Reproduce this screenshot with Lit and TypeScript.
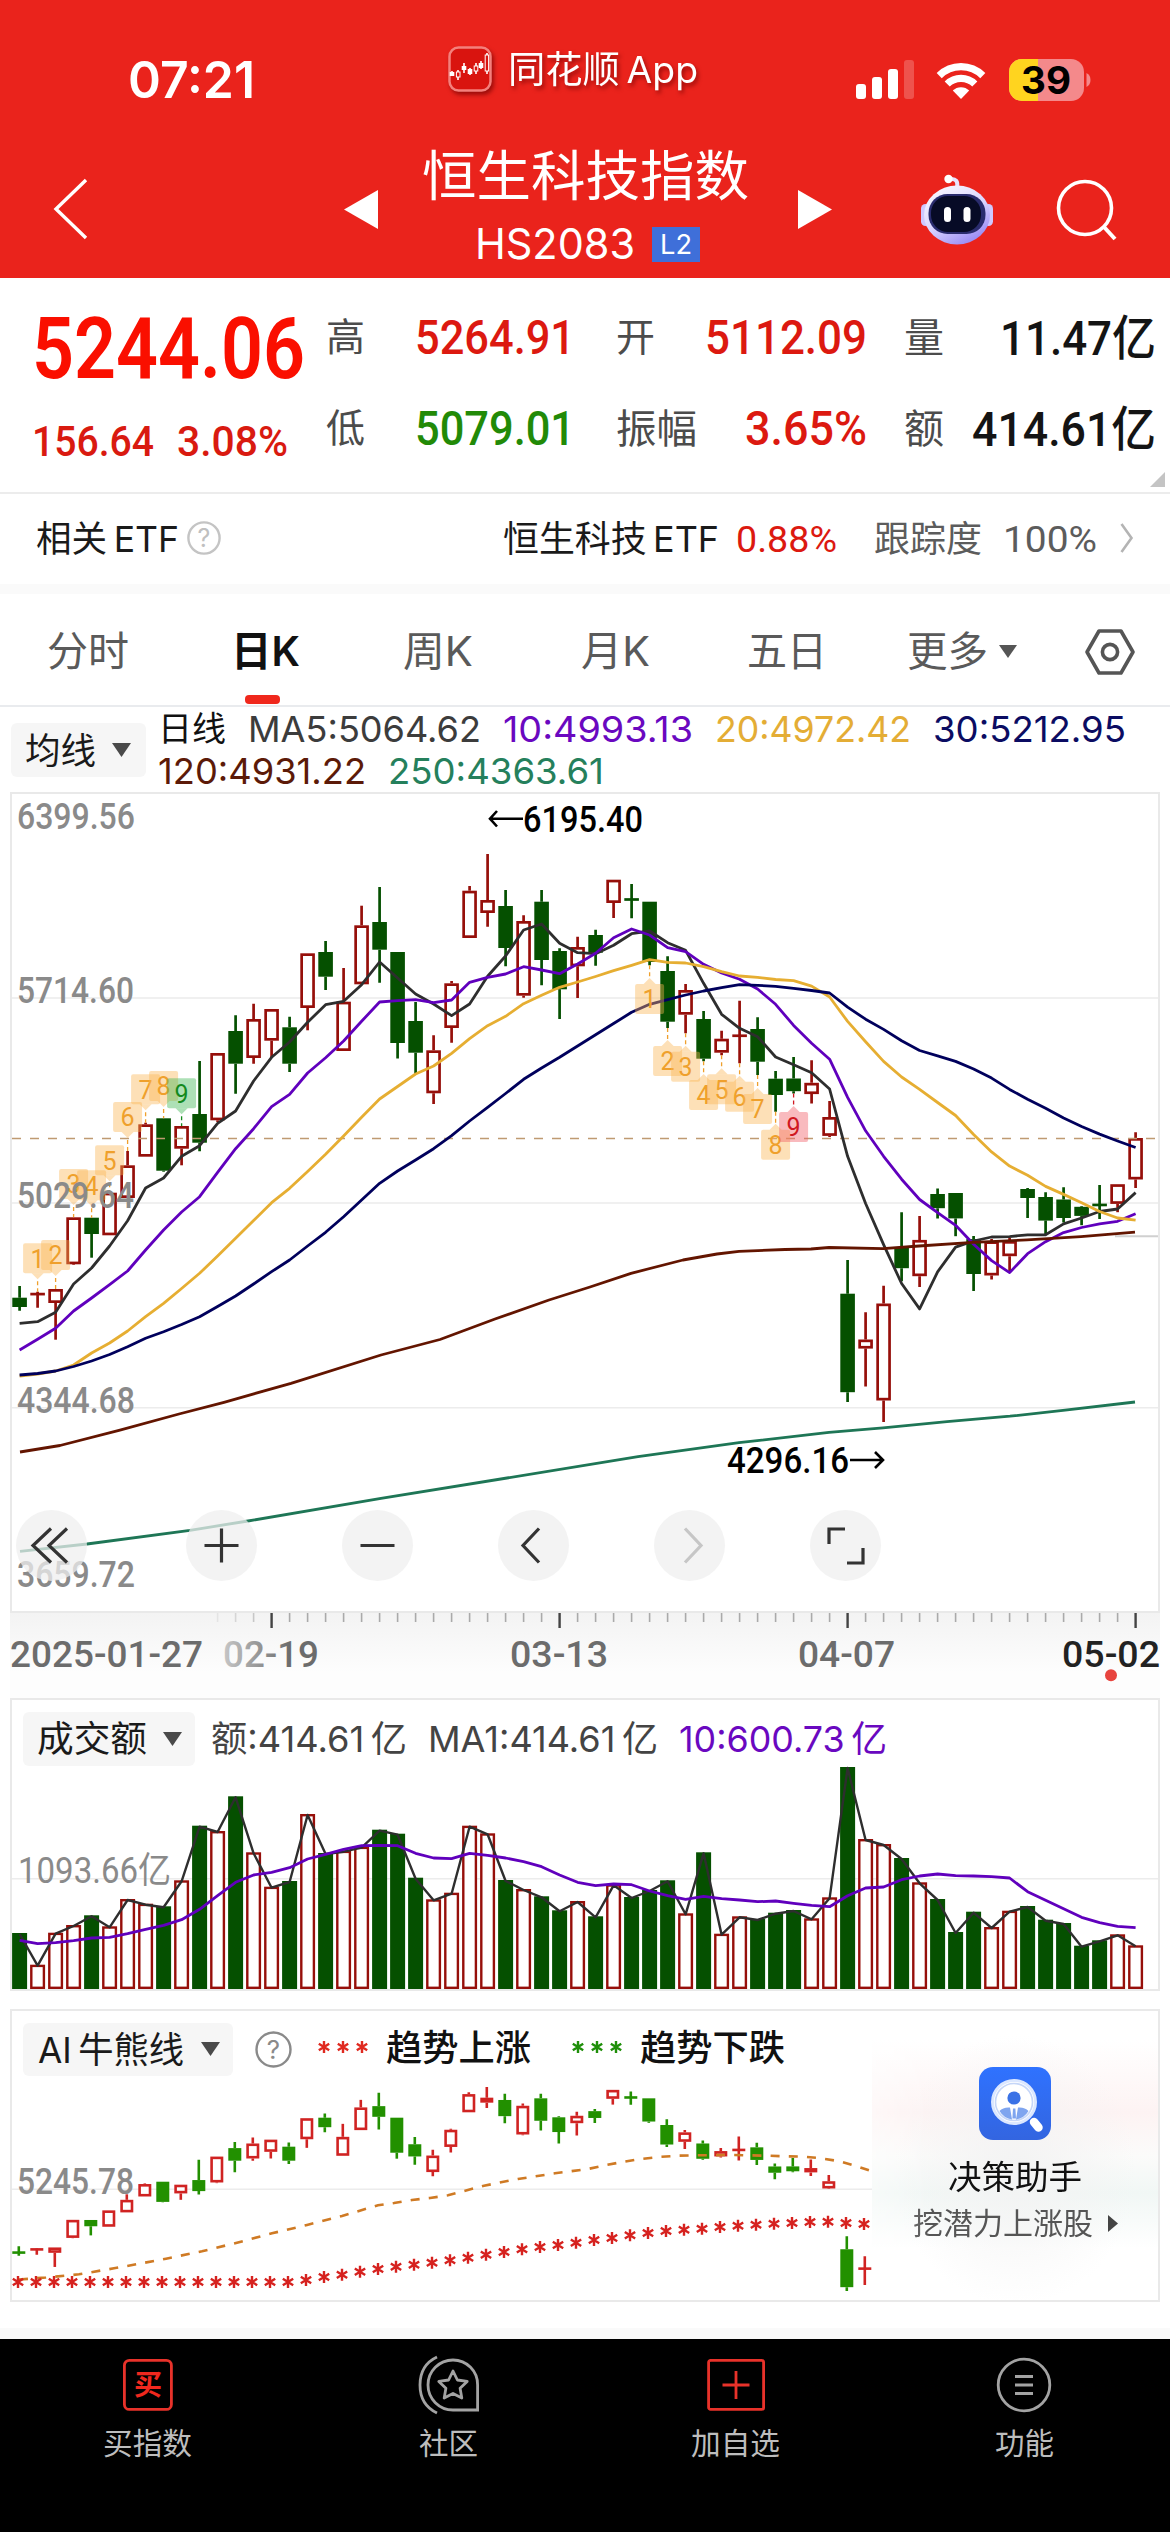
import { LitElement, html, css, svg } from "lit";
import { customElement } from "lit/decorators.js";

/* ---------- data ---------- */

// direction, high, body top, body bottom, low (plot units)
type Candle = [number, number, number, number, number];
const UP = 1;
const DN = 0;

const candles: Candle[] = [
  [DN, 1286, 1297.7, 1307, 1310.7], [UP, 1291.7, 1293, 1295.2, 1307.7], [UP, 1289, 1289, 1303, 1339.7],
  [UP, 1217.3, 1217.3, 1264.3, 1265], [DN, 1217.7, 1217.7, 1234, 1257.7], [UP, 1192.7, 1192.7, 1235.3, 1235.3],
  [UP, 1151, 1165.3, 1198, 1198], [UP, 1122.7, 1124.3, 1156.7, 1156.7], [DN, 1118.3, 1118.3, 1170.7, 1171.7],
  [UP, 1126, 1126, 1148.7, 1165.3], [DN, 1061, 1114, 1142.7, 1151.3], [UP, 1053, 1053, 1120.3, 1122],
  [DN, 1015.3, 1031, 1063.7, 1093.7], [UP, 1003.7, 1019, 1058, 1063.7], [UP, 1009, 1009, 1040.7, 1058],
  [DN, 1016.7, 1027.3, 1063.7, 1072], [UP, 953.3, 953.3, 1008, 1030.3], [DN, 941, 952, 976.7, 990],
  [UP, 968, 1001.7, 1051, 1051], [UP, 905.7, 925.3, 984.3, 984.3], [DN, 887, 922, 949.7, 982.7],
  [DN, 952, 952, 1043, 1058.5], [DN, 1002, 1021, 1052.7, 1074], [UP, 1035.3, 1050.3, 1093.3, 1104],
  [UP, 981, 983.3, 1028, 1042.7], [UP, 886, 890.7, 938, 938], [UP, 854, 900, 913, 926.7],
  [DN, 890, 906, 948, 966.3], [UP, 915.3, 921, 995.7, 997.7], [DN, 890, 901.7, 960, 985.3],
  [DN, 948.3, 951, 989.3, 1019], [UP, 936.7, 947, 966.3, 998], [DN, 929.7, 935, 952.7, 965.7],
  [UP, 879.7, 879.7, 903, 918], [DN, 884, 898, 901, 918.3], [DN, 901.7, 901.7, 962, 965.3],
  [DN, 956.3, 971, 1021.7, 1028], [UP, 984, 990, 1014.7, 1033.3], [DN, 1011, 1019, 1058.7, 1061.3],
  [UP, 1030.7, 1038.7, 1052.7, 1055.3], [UP, 1000.7, 1034.5, 1037, 1063.3], [DN, 1017.3, 1029, 1061.7, 1075],
  [DN, 1071, 1078.7, 1095, 1111.7], [DN, 1057, 1078.5, 1091.2, 1093.4], [UP, 1060.3, 1082.8, 1094.1, 1103.6],
  [UP, 1101, 1117, 1135.9, 1137], [DN, 1259.9, 1293.7, 1392.2, 1402], [UP, 1312.2, 1339.5, 1348.6, 1386.4],
  [UP, 1285.7, 1303.5, 1400.5, 1422], [DN, 1212.2, 1247.1, 1268.2, 1281.3], [UP, 1215.9, 1239.9, 1276.2, 1287.1],
  [DN, 1188.6, 1194, 1208.2, 1218.4], [DN, 1193, 1193, 1218.4, 1236.2], [DN, 1236, 1239.1, 1274, 1291.1],
  [UP, 1239.1, 1241.3, 1275.5, 1279.5], [UP, 1238, 1241, 1256.2, 1271.9], [DN, 1187.9, 1189, 1198, 1218],
  [DN, 1192.2, 1197, 1220.6, 1234.4], [DN, 1187.2, 1199.5, 1218, 1222.4], [DN, 1206, 1206.8, 1215.9, 1225.3],
  [DN, 1185, 1203.5, 1206.4, 1219.1], [UP, 1184.2, 1184.2, 1203.9, 1212.2], [UP, 1132.3, 1138, 1179.5, 1187.9],
];

const ma5 = [
  1323.3, 1321.7, 1312.3, 1284, 1268, 1246, 1220.7, 1188, 1178, 1156.3, 1145.7, 1123.3, 1111, 1081, 1057.3, 1042,
  1022.3, 1004.7, 1001.3, 984.7, 962, 978, 994, 1004, 1015.7, 1004, 976.3, 956, 930, 924, 943.3, 952.7, 953.7, 945.3,
  933.7, 931, 942.7, 950.3, 983.3, 1014.3, 1028.3, 1036.7, 1057, 1064.7, 1072.7, 1089, 1156.3, 1203.5, 1244.6, 1283.5,
  1308.9, 1271.9, 1247.1, 1241, 1237, 1236.6, 1234.8, 1234.8, 1223.9, 1218, 1211.5, 1209, 1192.6,
];
const ma10 = [
  1350, 1339.3, 1328.3, 1311, 1298, 1284.7, 1271, 1250, 1230, 1212, 1196.7, 1172.3, 1148.7, 1128.7, 1106.7, 1094.3,
  1073, 1057.7, 1041, 1021.3, 1002, 1000.7, 999.7, 1002.7, 1000, 982.3, 977.3, 974, 966.7, 970, 973.7, 964, 953.3,
  937.7, 929, 935, 947.7, 951.7, 964.3, 973, 979.3, 989, 1004.3, 1025.4, 1043.2, 1059.2, 1097.4, 1130.8, 1156.3,
  1179.2, 1199.5, 1212.6, 1225.3, 1244.2, 1260.6, 1272.6, 1253.7, 1241.7, 1232.6, 1227.5, 1223.9, 1221.3, 1213.7,
];
const ma20 = [
  1376, 1374, 1371, 1365, 1353, 1343, 1331, 1316.7, 1303.3, 1288.5, 1273.3, 1256, 1238.3, 1220.5, 1202.7, 1188.3,
  1171.5, 1154.3, 1136, 1117.3, 1099, 1086.5, 1074, 1066, 1053.3, 1038.7, 1025.7, 1016.3, 1003.7, 995.3, 987.3, 982,
  976.5, 970.7, 965.3, 959.7, 962.3, 963, 966.7, 971.7, 976, 977.3, 979.5, 980.7, 986.1, 997, 1021.4, 1041.8, 1061.4,
  1077, 1089.4, 1102.5, 1115.5, 1134.5, 1151.9, 1166.1, 1175.2, 1186.4, 1194.4, 1202.8, 1211.5, 1218, 1220.2,
];
const ma30 = [
  1375, 1373.5, 1371, 1366.5, 1361, 1354.5, 1346.7, 1338.3, 1331.7, 1324.5, 1316.7, 1306.5, 1296, 1284, 1271.7, 1260,
  1246, 1232.3, 1216.7, 1200, 1183.3, 1171, 1160, 1148.7, 1135.7, 1121, 1107.3, 1093.5, 1079.3, 1068, 1057.3, 1046,
  1034.7, 1023.5, 1012.3, 1004.3, 999.7, 995, 991, 987.7, 984.7, 985.3, 986.3, 988.3, 990.5, 993, 1007.2, 1019.2,
  1029.4, 1040.7, 1050.5, 1055.9, 1061.4, 1069, 1078.1, 1089.4, 1099.2, 1108.3, 1118.1, 1126.5, 1134.1, 1141, 1147.5,
];
const ma120 =
  "20,1452 60,1445.5 119,1430.3 179,1414 224,1402.3 291,1383.3 381,1355 440,1339.5 495,1319 549,1300 590,1287 631,1273.3 683,1260 717,1254 739,1251.3 785,1249.5 811,1249 829,1247.5 883,1248.6 919,1246 973,1242.4 1027,1239.9 1081,1236.6 1135,1232.2";
const ma250 =
  "20,1551.3 87,1544 190,1530.3 248,1521 381,1498.3 507,1478 638,1456.7 739,1442.7 829,1432.3 883,1427.8 947,1421.6 1010,1416.2 1063,1410.4 1135,1402";

const volTop = [
  1933, 1964.7, 1932.7, 1925, 1915.3, 1926.3, 1899, 1903.7, 1906.3, 1880.3, 1825.7, 1831, 1796.3, 1852.3, 1886.7, 1881,
  1814, 1853, 1850.7, 1846.7, 1829.7, 1833.7, 1877.7, 1899.3, 1892.7, 1825.7, 1833.3, 1880, 1889, 1896.3, 1910.3, 1901,
  1916.3, 1884.3, 1897, 1890, 1880.3, 1913.3, 1852.3, 1933.7, 1916.3, 1919, 1912.7, 1910, 1918.3, 1897.3, 1767, 1839,
  1844, 1858, 1882.3, 1899, 1932, 1911.7, 1927, 1910.7, 1906, 1919.7, 1923, 1945.7, 1940.3, 1934.3, 1945.3,
];
const volMa = [
  1940.3, 1943.7, 1942.7, 1940.7, 1938, 1937.3, 1933.7, 1929.3, 1925.3, 1919.7, 1909.3, 1895.7, 1882.3, 1875, 1872.3,
  1867.7, 1859, 1854.3, 1849.3, 1845.7, 1845.3, 1845.7, 1853.3, 1858, 1858.7, 1853.3, 1855.3, 1858, 1861.7, 1866.7, 1875,
  1882.3, 1885.7, 1884, 1884.7, 1891, 1895.7, 1899.3, 1896.3, 1898.7, 1900, 1901.7, 1901, 1903.3, 1905.3, 1906.7, 1895.7,
  1888, 1887, 1879.7, 1876, 1874, 1875.7, 1876, 1876.7, 1878, 1891.7, 1900.3, 1908.7, 1917.3, 1922.7, 1926.3, 1927.7,
];
const volBase = 1989;

const bullStars = [
  ...Array(16).fill(2282), 2280, 2277, 2274.7, 2271.7, 2269, 2266.7, 2264.7, 2262.7, 2260.3, 2257.7, 2254.7, 2252, 2249.3,
  2247, 2245, 2242.7, 2240, 2238, 2235.3, 2233, 2231, 2229.7, 2228.7, 2227, 2225.7, 2224.7, 2223.7, 2223, 2222, 2221.7,
  2223, 2224,
] as number[];
const bearLine =
  "19,2279.5 46,2277.5 79,2274.3 114,2268.3 131,2265.3 166,2258.7 202,2251.3 237,2242.7 272,2233.3 307,2225 342,2216 378,2205.3 394,2203 412,2200 430,2198 448,2195.3 484,2185.7 518,2179 555,2173.3 588,2169 606,2165 624,2161.7 641,2159 659,2157 677,2155.7 696,2155.3 731,2155 768,2155.7 785,2156.3 804,2156.7 821,2158.3 840,2161.3 857,2166.3 871,2171";

// index, badge top, digit, anchored above the candle (1) or below it (0), tone
const marks: [number, number, string, number, string][] = [
  [1, 1243.3, "1", 1, "y"], [2, 1240, "2", 1, "y"], [3, 1169, "3", 1, "y"], [4, 1170.3, "4", 1, "y"],
  [5, 1145.3, "5", 1, "y"], [6, 1102, "6", 1, "y"], [7, 1074.3, "7", 1, "y"], [8, 1071, "8", 1, "y"],
  [9, 1078.3, "9", 1, "g"], [35, 984, "1", 0, "y"], [36, 1046, "2", 0, "y"], [37, 1051.7, "3", 0, "y"],
  [38, 1080, "4", 0, "y"], [39, 1074.3, "5", 0, "y"], [40, 1081.7, "6", 0, "y"], [41, 1094, "7", 0, "y"],
  [42, 1129.7, "8", 0, "y"], [43, 1112, "9", 0, "r"],
];

/* ---------- drawing helpers ---------- */

const cx = (i: number) => 19.6 + 18 * i;
const line = (ys: number[]) => ys.map((y, i) => `${cx(i)},${y}`).join(" ");

// Text set to an exact advance width, vertically centred in its line box.
const fit = (text: string, w: number, size: number, cls = "", h = Math.round(size * 1.2)) => html`<svg
  class="fit ${cls}" width=${w} height=${h}><text y=${h / 2 + size * 0.365} font-size=${size}
  textLength=${w} lengthAdjust="spacingAndGlyphs">${text}</text></svg>`;

const label = (text: string, x: number, y: number, w: number, cls = "scale", size = 36) => svg`<text
  class=${cls} x=${x} y=${y} font-size=${size} textLength=${w} lengthAdjust="spacingAndGlyphs">${text}</text>`;

const candle = (c: Candle, x: number, half: number, sw: number, up: string, dn: string) => {
  const [dir, hi, top, bot, lo] = c;
  const color = dir ? up : dn;
  const thin = bot - top < 4;
  const wick = svg`<path d="M${x} ${hi}V${thin ? lo : top}M${x} ${bot}V${Math.max(lo, bot)}" stroke=${color} stroke-width=${sw}></path>`;
  if (thin) return svg`${wick}<path d="M${x - half} ${(top + bot) / 2}H${x + half}" stroke=${color} stroke-width=${sw}></path>`;
  return dir
    ? svg`${wick}<rect x=${x - half + sw / 2} y=${top + sw / 2} width=${half * 2 - sw} height=${Math.max(bot - top - sw, 1)}
        fill="#fff" stroke=${color} stroke-width=${sw}></rect>`
    : svg`${wick}<rect x=${x - half} y=${top} width=${half * 2} height=${bot - top} fill=${color}></rect>`;
};

const star = (x: number, y: number, color: string) => svg`<path transform="translate(${x} ${y})" stroke=${color}
  stroke-width="2.4" d="M0-6V6M-5.2-3.2L5.2 3.2M-5.2 3.2L5.2-3.2"></path>`;

const caret = html`<svg class="caret" width="19" height="14"><path d="M0 0H19L9.5 14Z" fill="#4a4a4a"></path></svg>`;

/* ---------- header ---------- */

@customElement("app-header")
class AppHeader extends LitElement {
  static styles = css`
    :host { display: block; height: 278px; background: #ea231c; color: #fff; font-family: Inter, "Noto Sans CJK SC", sans-serif; }
    svg { display: block; overflow: visible; }
    .fit { fill: currentColor; }
    .status { display: grid; grid-template-columns: 320px 408px 80px 73px auto; align-items: center; height: 121px; padding: 19px 0 0 128px; }
    .semi { font-weight: 600; }
    .bold { font-weight: 700; }
    .brand { display: flex; align-items: center; gap: 16px; margin-bottom: 21px; filter: drop-shadow(2px 3px 2px rgba(110, 0, 0, 0.65)); }
    .bar { display: grid; grid-template-columns: 290px 78px 376px 123px 136px auto; align-items: center; height: 138px; padding-left: 54px; }
    .title { display: flex; flex-direction: column; padding-top: 2px; }
    .code { display: flex; align-items: center; gap: 17px; padding-left: 53px; }
    .level { display: flex; align-items: center; justify-content: center; width: 48px; height: 35px; background: #3f6fd9; }
  `;

  render() {
    return html`
      <div class="status">
        ${fit("07:21", 127, 51, "semi")}
        <div class="brand">
          <svg width="44" height="46" viewBox="0 0 44 46">
            <rect x="1.5" y="1.5" width="41" height="43" rx="9" fill="#d9140f" stroke="#f4807c" stroke-width="2.5"></rect>
            <path d="M4 25V30M10 24V34M16 17V27M22 22V29M28 17V28M33 15V23M39 7V28" stroke="#fff" stroke-width="1.6"></path>
            <path d="M4 26V30M16 20V24M22 23V28M33 17V22" stroke="#fff" stroke-width="4.6"></path>
            <rect x="8.4" y="26" width="3.6" height="5" fill="#d9140f" stroke="#fff"></rect>
            <rect x="26.2" y="20" width="3.6" height="5" fill="#d9140f" stroke="#fff"></rect>
            <rect x="37.2" y="9" width="3.4" height="16" fill="#d9140f" stroke="#fff"></rect>
          </svg>
          ${fit("同花顺\u2009App", 190, 37)}
        </div>
        <svg width="58" height="39" viewBox="0 0 58 39" fill="#fff">
          <rect x="0" y="24" width="10" height="15" rx="3"></rect>
          <rect x="16" y="17" width="10" height="22" rx="3"></rect>
          <rect x="32" y="9" width="10" height="30" rx="3"></rect>
          <rect x="48" y="0" width="10" height="39" rx="3" opacity="0.22"></rect>
        </svg>
        <svg width="50" height="38" viewBox="0 0 50 38">
          <path d="M3.2 14.6a31 31 0 0 1 43.6 0M11.2 23a19.6 19.6 0 0 1 27.6 0" fill="none" stroke="#fff" stroke-width="7.2"></path>
          <path d="M25 38L16.8 29.6a11.6 11.6 0 0 1 16.4 0Z" fill="#fff"></path>
        </svg>
        <svg width="82" height="42" viewBox="0 0 82 42">
          <defs><clipPath id="cell"><rect width="75" height="42" rx="13"></rect></clipPath></defs>
          <g clip-path="url(#cell)"><rect width="75" height="42" fill="#f4898b"></rect><rect width="29" height="42" fill="#ffd41f"></rect></g>
          <path d="M77.5 14v14q4-2 4-7t-4-7Z" fill="#f4898b"></path>
          <text x="12" y="35" font-size="38" font-weight="700" fill="#000" textLength="50" lengthAdjust="spacingAndGlyphs">39</text>
        </svg>
      </div>
      <div class="bar">
        <svg width="33" height="60" viewBox="0 0 33 60"><path d="M32 1L2 30L32 59" fill="none" stroke="#fff" stroke-width="3.4"></path></svg>
        <svg width="34" height="39"><path d="M34 0V39L0 19.5Z" fill="#fff"></path></svg>
        <div class="title">
          ${fit("恒生科技指数", 327, 54, "", 68)}
          <div class="code">
            ${fit("HS2083", 160, 42, "", 68)}
            <div class="level">${fit("L2", 32, 27)}</div>
          </div>
        </div>
        <svg width="34" height="39"><path d="M0 0V39L34 19.5Z" fill="#fff"></path></svg>
        <svg width="72" height="70" viewBox="0 0 72 70">
          <defs>
            <linearGradient id="shell" x1="0" y1="0" x2="0.6" y2="1"><stop offset="0" stop-color="#fff"></stop><stop offset="0.6" stop-color="#d9d4ff"></stop><stop offset="1" stop-color="#9d8ff5"></stop></linearGradient>
          </defs>
          <path d="M36 14Q38 4 29 5" fill="none" stroke="#e8e4ff" stroke-width="4"></path>
          <circle cx="27.5" cy="5" r="4.2" fill="#fff"></circle>
          <rect x="0" y="30" width="9" height="22" rx="4.5" fill="#cfc8ff"></rect>
          <rect x="63" y="30" width="9" height="22" rx="4.5" fill="#cfc8ff"></rect>
          <ellipse cx="36" cy="41" rx="33" ry="29.5" fill="url(#shell)"></ellipse>
          <rect x="7.5" y="20" width="57" height="40" rx="19" fill="#2a2c6e"></rect>
          <rect x="10" y="22" width="50" height="36" rx="17" fill="#070b26"></rect>
          <rect x="23" y="33" width="7" height="15" rx="3.5" fill="#fff"></rect>
          <rect x="42.5" y="33" width="7" height="15" rx="3.5" fill="#fff"></rect>
        </svg>
        <svg width="60" height="60" viewBox="0 0 60 60">
          <circle cx="28" cy="29" r="26.5" fill="none" stroke="#fff" stroke-width="3.6"></circle>
          <path d="M47 48L58 60" stroke="#fff" stroke-width="4"></path>
        </svg>
      </div>
    `;
  }
}

/* ---------- quote ---------- */

@customElement("quote-panel")
class QuotePanel extends LitElement {
  static styles = css`
    :host { display: block; font-family: Inter, "Noto Sans CJK SC", sans-serif; background: #fff; }
    svg { display: block; overflow: visible; }
    .fit { fill: currentColor; }
    .din { font-family: Roboto, "Noto Sans CJK SC", sans-serif; font-weight: 500; }
    .heavy { font-family: Roboto, sans-serif; font-weight: 600; }
    .quote { display: grid; grid-template-columns: 294px 1fr; height: 216px; padding-left: 32px; box-sizing: border-box; border-bottom: 2px solid #ececec; position: relative; }
    .last { color: #fa0f00; display: flex; flex-direction: column; }
    .price { padding-top: 18px; }
    .change { display: flex; gap: 23px; color: #d91a10; padding-top: 15px; }
    .stats { display: grid; grid-template-columns: 92px 157px 41px 88px 163px 37px 68px 184px; grid-template-rows: 91px 91px; align-content: start; align-items: center; padding-top: 13px; color: #4c4c4c; }
    .stats .din { justify-self: end; }
    .up { color: #dc1910; }
    .down { color: #228a07; }
    .ink { color: #141414; }
    .corner { position: absolute; right: 5px; bottom: 5px; }
    .etf { display: grid; grid-template-columns: 151px 316px 233px 138px 129px 117px auto; align-items: center; height: 90px; padding-left: 36px; color: #1a1a1a; margin-top: -1px; }
    .grey { color: #5c5c5c; }
    .band { height: 10px; margin-top: 1px; background: #fafafa; }
    .reg { font-weight: 400; }
  `;

  render() {
    return html`
      <div class="quote">
        <div class="last">
          <div class="price">${fit("5244.06", 273, 85, "heavy", 102)}</div>
          <div class="change">${fit("156.64", 122, 43, "din", 55)}${fit("3.08%", 111, 43, "din", 55)}</div>
        </div>
        <div class="stats">
          ${fit("高", 39, 39)}${fit("5264.91", 160, 49, "din up")}<i></i>
          ${fit("开", 39, 39)}${fit("5112.09", 162, 49, "din up")}<i></i>
          ${fit("量", 40, 40)}${fit("11.47亿", 156, 48, "din ink")}
          ${fit("低", 39, 39)}${fit("5079.01", 160, 49, "din down")}<i></i>
          ${fit("振幅", 81, 40)}${fit("3.65%", 122, 49, "din up")}<i></i>
          ${fit("额", 40, 40)}${fit("414.61亿", 184, 48, "din ink")}
        </div>
        <svg class="corner" width="15" height="15"><path d="M15 0V15H0Z" fill="#c4c4c4"></path></svg>
      </div>
      <div class="etf">
        ${fit("相关\u2009ETF", 143, 36)}
        <svg width="34" height="34" viewBox="0 0 34 34"><circle cx="17" cy="17" r="15.6" fill="none" stroke="#c4c4c4" stroke-width="2.4"></circle><text x="17" y="26" text-anchor="middle" font-size="25" fill="#c0c0c0">?</text></svg>
        ${fit("恒生科技\u2009ETF", 216, 36)}
        ${fit("0.88%", 101, 37, "din reg up")}
        ${fit("跟踪度", 108, 36, "grey")}
        ${fit("100%", 94, 37, "din reg grey")}
        <svg width="13" height="30" viewBox="0 0 13 30"><path d="M1.5 1L11.5 15L1.5 29" fill="none" stroke="#b4b4b4" stroke-width="2.6"></path></svg>
      </div>
      <div class="band"></div>
    `;
  }
}

/* ---------- period tabs and moving-average legend ---------- */

@customElement("period-tabs")
class PeriodTabs extends LitElement {
  static styles = css`
    :host { display: block; font-family: Inter, "Noto Sans CJK SC", sans-serif; color: #5a5a5a; }
    svg { display: block; overflow: visible; }
    .fit { fill: currentColor; }
    .tabs { display: grid; grid-template-columns: 184px 172px 178px 166px 160px 92px 86px auto; height: 113px; padding: 4px 0 0 47px; box-sizing: border-box; align-items: center; border-bottom: 2px solid #e9ebee; }
    .active { position: relative; color: #111; font-weight: 600; }
    .mark { position: absolute; left: 14px; bottom: -28px; width: 35px; height: 9px; border-radius: 4px; background: #f0281c; }
    .legend { display: flex; gap: 12px; height: 85px; padding-left: 11px; }
    .pick { display: flex; align-items: center; gap: 16px; box-sizing: border-box; width: 135px; height: 54px; margin-top: 16px; padding-left: 14px; border-radius: 6px; background: #f6f6f6; color: #1a1a1a; }
    .row { display: flex; gap: 22px; height: 42px; align-items: center; }
    .c0 { color: #111; } .c5 { color: #3c3c3c; } .c10 { color: #6a08c0; } .c20 { color: #e4ad35; }
    .c30 { color: #0b0c62; } .c120 { color: #5c1a08; } .c250 { color: #25805c; }
  `;

  render() {
    return html`
      <div class="tabs">
        ${fit("分时", 82, 41)}
        <div class="active">${fit("日K", 69, 41)}<div class="mark"></div></div>
        ${fit("周K", 70, 41)}${fit("月K", 69, 41)}${fit("五日", 80, 41)}${fit("更多", 81, 41)}
        <svg width="18" height="13"><path d="M0 0H18L9 13Z" fill="#555"></path></svg>
        <svg width="50" height="46" viewBox="0 0 50 46" fill="none" stroke="#555" stroke-width="3.6">
          <path d="M14 2H36L48 23L36 44H14L2 23Z" stroke-linejoin="round"></path><circle cx="25" cy="23" r="7.6"></circle>
        </svg>
      </div>
      <div class="legend">
        <div class="pick">${fit("均线", 71, 36)}${caret}</div>
        <div class="lines">
          <div class="row">
            ${fit("日线", 68, 34, "c0")}${fit("MA5:5064.62", 233, 36, "c5")}${fit("10:4993.13", 190, 36, "c10")}${fit("20:4972.42", 196, 36, "c20")}${fit("30:5212.95", 193, 36, "c30")}
          </div>
          <div class="row">${fit("120:4931.22", 208, 36, "c120")}${fit("250:4363.61", 216, 36, "c250")}</div>
        </div>
      </div>
    `;
  }
}

/* ---------- candlestick chart ---------- */

@customElement("price-chart")
class PriceChart extends LitElement {
  static styles = css`
    :host { display: block; font-family: Roboto, "Noto Sans CJK SC", sans-serif; }
    .box { position: relative; margin-left: 10px; width: 1146px; height: 817px; border: 2px solid #e9e9e9; }
    svg { display: block; overflow: visible; }
    .scale { fill: #8a8a8a; font-weight: 500; }
    .peak { fill: #000; font-weight: 500; }
    .digit { font-size: 25px; text-anchor: middle; }
    .tools { position: absolute; left: 4px; bottom: 30px; display: flex; gap: 85px; }
    .tools svg { width: 71px; height: 71px; border-radius: 50%; background: rgba(239, 239, 239, 0.74); fill: none; stroke: #333; stroke-width: 3.2; }
    .tools svg:first-child { margin-right: 14px; }
    .tools .off { stroke: #c6c6c6; }
    .axis { height: 85px; background: linear-gradient(#f3f3f3, #fdfdfd 70%); margin-left: 10px; width: 1150px; }
    .date { fill: #6c6c6c; font-weight: 500; }
    .today { fill: #222; font-weight: 500; }
  `;

  private mark([i, top, digit, above, tone]: (typeof marks)[number]) {
    const x = cx(i);
    const fills: Record<string, string> = { y: "#fbb654", g: "#3cb450", r: "#f05a64" };
    const inks: Record<string, string> = { y: "#efa02c", g: "#158a1e", r: "#d01822" };
    const tip = above ? `M${x - 6} ${top + 30}L${x} ${top + 36}L${x + 6} ${top + 30}Z` : `M${x - 6} ${top}L${x} ${top - 6}L${x + 6} ${top}Z`;
    const stem = above ? `M${x} ${top + 38}V${candles[i][1]}` : `M${x} ${candles[i][4]}V${top - 6}`;
    return svg`<g fill-opacity="0.42" fill=${fills[tone]}><rect x=${x - 14.5} y=${top} width="29" height="30" rx="2"></rect><path d=${tip}></path></g>
      <path d=${stem} stroke=${inks[tone]} stroke-width="1.3" stroke-dasharray="4 3"></path>
      <text class="digit" x=${x} y=${top + 24.4} fill=${inks[tone]}>${digit}</text>`;
  }

  render() {
    const ticks = Array.from({ length: 52 }, (_, k) => k + 11);
    return html`
      <div class="box">
        <svg width="1146" height="817" viewBox="12 794 1146 817">
          <path d="M12 998H1158M12 1203H1158M12 1407.7H1158" stroke="#ececec" stroke-width="1.6"></path>
          <path d="M1115 1236.2H1158" stroke="#d0d0d0" stroke-width="2"></path>
          ${candles.map((c, i) => candle(c, cx(i), 7.3, 2.7, "#960f0a", "#055000"))}
          <path d="M12 1138.5H1158" stroke="#bf9a72" stroke-width="1.5" stroke-dasharray="9 9"></path>
          <g fill="none" stroke-width="2.8" stroke-linejoin="round">
            <polyline points=${line(ma5)} stroke="#2e2e2e"></polyline>
            <polyline points=${line(ma10)} stroke="#6000bd"></polyline>
            <polyline points=${line(ma20)} stroke="#e6ae32"></polyline>
            <polyline points=${line(ma30)} stroke="#00005c"></polyline>
            <polyline points=${ma120} stroke="#631500"></polyline>
            <polyline points=${ma250} stroke="#1e7656"></polyline>
          </g>
          ${marks.map((m) => this.mark(m))}
          ${label("6399.56", 17, 828.5, 118)}${label("5714.60", 17, 1002.5, 117)}${label("5029.64", 17, 1207.5, 117)}
          ${label("4344.68", 17, 1412.5, 118)}${label("3659.72", 17, 1587, 118)}
          <path d="M497 811L490 818.7L497 826.5M490 818.7H523" fill="none" stroke="#000" stroke-width="2.6"></path>
          ${label("6195.40", 523, 831.7, 120, "peak", 36)}
          ${label("4296.16", 727, 1473, 122, "peak", 36)}
          <path d="M850 1460H883M875 1452L883 1460L875 1468" fill="none" stroke="#000" stroke-width="2.6"></path>
        </svg>
        <div class="tools">
          <svg viewBox="0 0 71 71"><path d="M35 18.5L17 35.5L35 52.5M51 18.5L33 35.5L51 52.5"></path></svg>
          <svg viewBox="0 0 71 71"><path d="M35.5 18.5V52.5M18.5 35.5H52.5"></path></svg>
          <svg viewBox="0 0 71 71"><path d="M18.5 35.5H52.5"></path></svg>
          <svg viewBox="0 0 71 71"><path d="M41 18.5L25 35.5L41 52.5"></path></svg>
          <svg class="off" viewBox="0 0 71 71"><path d="M31 18.5L47 35.5L31 52.5"></path></svg>
          <svg viewBox="0 0 71 71"><path d="M19 34V19H35M37 53H53V38"></path></svg>
        </div>
      </div>
      <div class="axis">
        <svg width="1150" height="85" viewBox="10 1613 1150 85">
          <defs><linearGradient id="fade" x1="225" x2="290" y1="0" y2="0" gradientUnits="userSpaceOnUse"><stop offset="0" stop-color="#c4c4c4"></stop><stop offset="1" stop-color="#6c6c6c"></stop></linearGradient></defs>
          ${ticks.map((i) => (i - 14) % 16 === 0
            ? svg`<path d="M${cx(i)} 1612V1628" stroke="#444" stroke-width="2.4"></path>`
            : svg`<path d="M${cx(i)} 1613V1622" stroke="#aaa" stroke-width="1.6" opacity=${i < 14 ? (i - 10) / 5 : 1}></path>`)}
          ${label("2025-01-27", 10, 1666.5, 193, "date")}
          <text fill="url(#fade)" font-weight="500" x="223" y="1666.5" font-size="36" textLength="96" lengthAdjust="spacingAndGlyphs">02-19</text>
          ${label("03-13", 510, 1666.5, 98, "date")}${label("04-07", 798, 1666.5, 97, "date")}
          ${label("05-02", 1062, 1666.5, 98, "today")}
          <circle cx="1111" cy="1675.3" r="6" fill="#e8443e"></circle>
        </svg>
      </div>
    `;
  }
}

/* ---------- turnover chart ---------- */

@customElement("volume-chart")
class VolumeChart extends LitElement {
  static styles = css`
    :host { display: block; box-sizing: border-box; margin-left: 10px; width: 1150px; height: 293px; border: 2px solid #e9e9e9; font-family: Inter, "Noto Sans CJK SC", sans-serif; }
    svg { display: block; overflow: visible; }
    .fit { fill: currentColor; }
    .head { display: flex; align-items: center; height: 77px; padding-left: 11px; gap: 21px; color: #444; }
    .pick { display: flex; align-items: center; gap: 16px; box-sizing: border-box; width: 172px; height: 54px; padding-left: 14px; margin-right: -5px; border-radius: 6px; background: #f6f6f6; color: #1a1a1a; }
    .ma { color: #6a08c0; }
    .scale { fill: #8a8a8a; font-family: Roboto, "Noto Sans CJK SC", sans-serif; }
  `;

  render() {
    const tops = volTop.map((y) => y + 1);
    return html`
      <div class="head">
        <div class="pick">${fit("成交额", 110, 36)}${caret}</div>
        ${fit("额:414.61\u2009亿", 196, 36)}${fit("MA1:414.61\u2009亿", 230, 36)}${fit("10:600.73\u2009亿", 208, 36, "ma")}
      </div>
      <svg width="1146" height="212" viewBox="12 1777 1146 212">
        <path d="M12 1878.7H1158" stroke="#ececec" stroke-width="1.6"></path>
        ${label("1093.66亿", 18, 1883, 153)}
        ${volTop.map((y, i) => candle([candles[i][0], y, y, volBase, volBase], cx(i), 7.5, 2.4, "#960f0a", "#055000"))}
        <g fill="none" stroke-linejoin="round">
          <polyline points=${line(tops)} stroke="#2e2e2e" stroke-width="2.4"></polyline>
          <polyline points=${line(volMa)} stroke="#6000bd" stroke-width="2.8"></polyline>
        </g>
      </svg>
    `;
  }
}

/* ---------- trend indicator and promo ---------- */

@customElement("trend-chart")
class TrendChart extends LitElement {
  static styles = css`
    :host { display: grid; grid-template-columns: 860px 1fr; box-sizing: border-box; margin: 18px 0 26px 10px; width: 1150px; height: 293px; border: 2px solid #e9e9e9; font-family: Inter, "Noto Sans CJK SC", sans-serif; }
    svg { display: block; overflow: visible; }
    .fit { fill: currentColor; }
    .head { display: flex; align-items: center; height: 76px; padding-left: 11px; color: #111; }
    .pick { display: flex; align-items: center; gap: 17px; box-sizing: border-box; width: 210px; height: 53px; padding-left: 15px; margin-right: 22px; border-radius: 6px; background: #f6f6f6; color: #1a1a1a; }
    .stars { margin-left: 26px; margin-right: 18px; }
    .gap { width: 15px; }
    .med { font-weight: 500; margin-top: -3px; }
    .scale { fill: #8a8a8a; font-family: Roboto, sans-serif; font-weight: 500; }
    .plot { overflow: hidden; }
    .promo { display: flex; flex-direction: column; align-items: center; padding: 56px 0 0; color: #111;
      background: radial-gradient(ellipse at 50% 55%, #f3f3f3 0, rgba(248, 248, 248, 0) 60%), linear-gradient(#fff 10%, #fdf3f3 35%, #fbfbfa 50%, #f1f7f5 63%, #fff 82%);
      -webkit-mask-image: linear-gradient(90deg, rgba(0, 0, 0, 0.6), #000 20%); }
    .name { padding-top: 17px; }
    .more { display: flex; align-items: center; gap: 15px; padding-top: 8px; color: #555; }
  `;

  render() {
    const y = (v: number) => 2189.3 + (v - 1138) * 0.385;
    const row = (color: string) => html`<svg class="stars" width="50" height="20" viewBox="-6 -7 50 20">
      ${[0, 19, 38].map((x) => star(x, 1, color))}</svg>`;
    return html`
      <div>
        <div class="head">
          <div class="pick">${fit("AI\u2009牛熊线", 146, 36)}${caret}</div>
          <svg width="37" height="37" viewBox="0 0 37 37"><circle cx="18.5" cy="18.5" r="17" fill="none" stroke="#8a8a8a" stroke-width="2.4"></circle><text x="18.5" y="28" text-anchor="middle" font-size="26" fill="#8a8a8a">?</text></svg>
          ${row("#e02a20")}${fit("趋势上涨", 145, 36, "med")}
          <span class="gap"></span>${row("#1f8f0a")}${fit("趋势下跌", 145, 36, "med")}
        </div>
        <svg class="plot" width="860" height="213" viewBox="12 2087 860 213">
          <path d="M12 2189.3H872" stroke="#ececec" stroke-width="1.6"></path>
          ${candles.slice(0, 48).map((c, i) => candle([c[0], y(c[1]), y(c[2]), y(c[3]), y(c[4])], 18.8 + 18 * i, 6.5, 2.6, "#d02322", "#229000"))}
          <polyline points=${bearLine} fill="none" stroke="#cf7a24" stroke-width="2.6" stroke-dasharray="9 9.2"></polyline>
          ${bullStars.map((v, i) => star(18 + 18 * i, v, "#d6221f"))}
          ${label("5245.78", 17, 2193.5, 117)}
        </svg>
      </div>
      <div class="promo">
        <svg width="72" height="73" viewBox="0 0 72 73">
          <defs><linearGradient id="blue" x1="0" y1="0" x2="0" y2="1"><stop offset="0" stop-color="#2f72ff"></stop><stop offset="1" stop-color="#3365e0"></stop></linearGradient></defs>
          <rect width="72" height="73" rx="14" fill="url(#blue)"></rect>
          <circle cx="35" cy="35" r="21.5" fill="#fff" stroke="#dbe7ff" stroke-width="3"></circle>
          <circle cx="35" cy="35" r="18.5" fill="none" stroke="#c5d6f8" stroke-width="1.6"></circle>
          <circle cx="35" cy="31" r="6.6" fill="#3b72e6"></circle>
          <path d="M20.5 44Q24 40 31 40.5L33 52.5Q25 51.5 20.5 44ZM49.5 44Q46 40 39 40.5L37 52.5Q45 51.5 49.5 44ZM34 41.5H36.4L37 51.5H33.4Z" fill="#7fa5ef"></path>
          <path d="M55 55L59.5 60.5" stroke="#fff" stroke-width="8.5" stroke-linecap="round"></path>
        </svg>
        <div class="name">${fit("决策助手", 134, 33)}</div>
        <div class="more">${fit("挖潜力上涨股", 180, 30)}<svg width="10" height="17"><path d="M0 0L10 8.5L0 17Z" fill="#444"></path></svg></div>
      </div>
    `;
  }
}

/* ---------- bottom bar ---------- */

@customElement("bottom-bar")
class BottomBar extends LitElement {
  static styles = css`
    :host { display: block; font-family: "Noto Sans CJK SC", sans-serif; }
    svg { display: block; overflow: visible; }
    .fit { fill: currentColor; }
    .band { height: 11px; background: #fafafa; }
    .bar { display: grid; grid-template-columns: 293px 309px 265px 303px; box-sizing: border-box; height: 193px; padding-left: 1px; background: #000; color: #bdbdbd; }
    .item { display: flex; flex-direction: column; align-items: center; gap: 10px; padding-top: 16px; }
    .item:last-child { padding-left: 9px; }
    .item svg.icon { width: 62px; height: 60px; }
    .bar .icon { fill: none; stroke: #a3a3a3; stroke-width: 2.8; }
    .bar .hot { stroke: #e8322a; }
  `;

  render() {
    return html`
      <div class="band"></div>
      <div class="bar">
        <div class="item">
          <svg class="icon hot" viewBox="0 0 62 60"><rect x="7.4" y="5.4" width="47" height="49" rx="5"></rect>
            <text x="31" y="40" text-anchor="middle" font-size="28" font-weight="700" fill="#f0281e" stroke="none">买</text></svg>
          ${fit("买指数", 89, 30)}
        </div>
        <div class="item">
          <svg class="icon" viewBox="0 0 62 60"><path d="M19 2Q2 10 2 30T19 58M35 5A24.6 24.6 0 0 0 35 55H59.6V30A24.6 24.6 0 0 0 35 5Z"></path>
            <path stroke-linejoin="round" d="M35 16l4.4 9 9.8 1.4-7.1 6.9 1.7 9.8-8.8-4.6-8.8 4.6 1.7-9.8-7.1-6.9 9.8-1.4Z"></path></svg>
          ${fit("社区", 59, 30)}
        </div>
        <div class="item">
          <svg class="icon hot" viewBox="0 0 62 60"><rect x="3.6" y="5.4" width="55" height="49" rx="2"></rect><path d="M31 16V44M17.5 30H44.5"></path></svg>
          ${fit("加自选", 89, 30)}
        </div>
        <div class="item">
          <svg class="icon" viewBox="0 0 62 60"><circle cx="31" cy="30" r="25.8"></circle><path d="M22 21.5H40M22 30H40M22 38.5H40"></path></svg>
          ${fit("功能", 59, 30)}
        </div>
      </div>
    `;
  }
}

@customElement("app-root")
class AppRoot extends LitElement {
  static styles = css`
    :host { display: block; width: 1170px; height: 2532px; overflow: hidden; background: #fff; }
  `;

  render() {
    return html`
      <app-header></app-header>
      <quote-panel></quote-panel>
      <period-tabs></period-tabs>
      <price-chart></price-chart>
      <volume-chart></volume-chart>
      <trend-chart></trend-chart>
      <bottom-bar></bottom-bar>
    `;
  }
}
